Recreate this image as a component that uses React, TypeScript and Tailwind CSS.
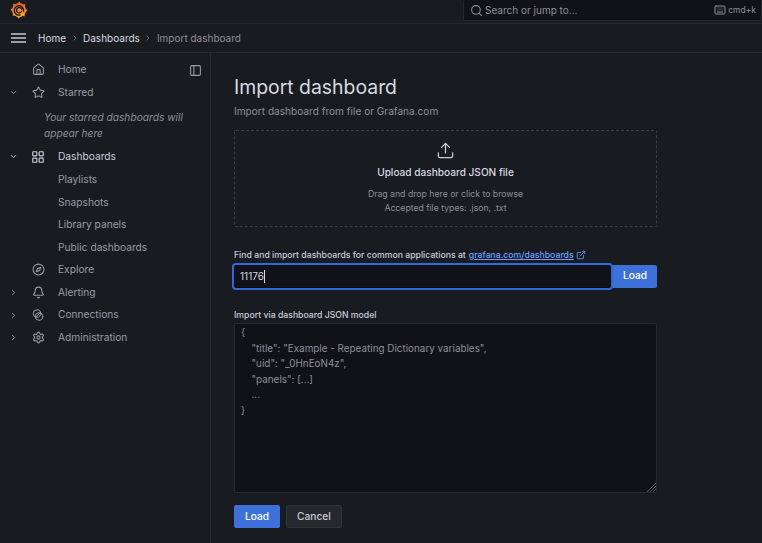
import { Home, Star, LayoutGrid, Compass, Bell, Settings, ChevronDown, ChevronRight, Search, Keyboard, Upload, ExternalLink, PanelLeft } from "lucide-react";

const FONT = "font-['Inter','Liberation_Sans',sans-serif]";

function GrafanaLogo() {
  const teeth = [0, 45, 90, 135, 180, 225, 270, 315];
  return (
    <svg width="18" height="18" viewBox="0 0 24 24">
      <defs>
        <linearGradient id="gf" x1="0" y1="1" x2="0" y2="0" gradientUnits="objectBoundingBox">
          <stop offset="0" stopColor="#fbb01c" />
          <stop offset="1" stopColor="#f0552a" />
        </linearGradient>
      </defs>
      {teeth.map((a) => (
        <path key={a} d="M8.5 5 L12.5 0.5 L16 5 Z" fill="#f47a22" transform={`rotate(${a} 12 12)`} />
      ))}
      <circle cx="12" cy="12" r="9.2" fill="url(#gf)" />
      <path d="M18 13.5 A6.2 6.2 0 1 0 13.5 18.6" fill="none" stroke="#181b1f" strokeWidth="1.9" strokeLinecap="round" />
      <path d="M15.4 14 A3.6 3.6 0 1 1 15.6 10.8" fill="none" stroke="#181b1f" strokeWidth="1.8" strokeLinecap="round" />
    </svg>
  );
}

function ConnectionsIcon() {
  return (
    <svg width="12" height="12" viewBox="0 0 24 24" fill="none" stroke="currentColor" strokeWidth="2" strokeLinecap="round">
      <circle cx="10" cy="9" r="7.5" />
      <circle cx="14" cy="15" r="7.5" />
      <path d="M9 15l6-6" />
    </svg>
  );
}

type NavItem = { label: string; icon?: React.ReactNode; caret?: "down" | "right"; active?: boolean };

const TOP: NavItem[] = [
  { label: "Home", icon: <Home size={13} /> },
  { label: "Starred", icon: <Star size={13} />, caret: "down" },
];

const MIDDLE: NavItem[] = [
  { label: "Dashboards", icon: <LayoutGrid size={14} />, caret: "down", active: true },
  { label: "Playlists" },
  { label: "Snapshots" },
  { label: "Library panels" },
  { label: "Public dashboards" },
  { label: "Explore", icon: <Compass size={13} /> },
  { label: "Alerting", icon: <Bell size={13} />, caret: "right" },
  { label: "Connections", icon: <ConnectionsIcon />, caret: "right" },
  { label: "Administration", icon: <Settings size={13} />, caret: "right" },
];

function NavRow({ item }: { item: NavItem }) {
  return (
    <div className={`flex h-[22.6px] items-center text-[10.2px] ${item.active ? "text-[#ccccdc]" : "text-[#9b9ca6]"}`}>
      <span className="flex w-[26px] justify-center">
        {item.caret === "down" && <ChevronDown size={9} strokeWidth={2.5} />}
        {item.caret === "right" && <ChevronRight size={9} strokeWidth={2.5} />}
      </span>
      <span className="flex w-[24px] justify-center">{item.icon}</span>
      <span className="ml-[8px]">{item.label}</span>
    </div>
  );
}

export default function App() {
  return (
    <div className={`flex h-[543px] w-[762px] flex-col overflow-hidden bg-[#181b1f] text-[#ccccdc] ${FONT}`}>
      {/* Top bar */}
      <header className="flex h-[24px] shrink-0 items-start border-b border-[#26292e] pl-[10px]">
        <div className="mt-[1px]">
          <GrafanaLogo />
        </div>
        <div className="ml-auto flex h-[21px] w-[299px] items-center rounded-[2px] border border-t-0 border-[#24272c] bg-[#111217] pl-[6px] pr-[5px] text-[#8e8f98]">
          <Search size={13} />
          <span className="ml-[2px] text-[10px]">Search or jump to...</span>
          <Keyboard size={12} className="ml-auto" />
          <span className="ml-[2px] text-[8.5px]">cmd+k</span>
        </div>
      </header>

      {/* Breadcrumbs */}
      <div className="flex h-[29px] shrink-0 items-center border-b border-[#26292e] pl-[11px] text-[10px]">
        <svg width="15" height="10" viewBox="0 0 15 10" className="text-[#c8c9d2]" stroke="currentColor" strokeWidth="1.5">
          <path d="M0 1h15M0 5h15M0 9h15" />
        </svg>
        <span className="ml-[12px] text-[#d8d9e2]">Home</span>
        <ChevronRight size={8} className="mx-[4.5px] text-[#8e8f98]" />
        <span className="text-[#d8d9e2]">Dashboards</span>
        <ChevronRight size={8} className="mx-[4.5px] text-[#8e8f98]" />
        <span className="text-[#8e8f98]">Import dashboard</span>
      </div>

      <div className="flex min-h-0 flex-1">
        {/* Sidebar */}
        <aside className="relative w-[211px] shrink-0 border-r border-[#26292e] pt-[5.5px]">
          <PanelLeft size={13} className="absolute right-[8px] top-[10.5px] text-[#9b9ca6]" />
          {TOP.map((item) => (
            <NavRow key={item.label} item={item} />
          ))}
          <p className="ml-[44px] mt-[5px] w-[150px] text-[10.2px] leading-[16px] italic text-[#8e8f98]">
            Your starred dashboards will appear here
          </p>
          <div className="mt-[5px]">
            {MIDDLE.map((item) => (
              <NavRow key={item.label} item={item} />
            ))}
          </div>
        </aside>

        {/* Main */}
        <main className="min-w-0 flex-1 pl-[23px] pr-[105px] pt-[20px]">
          <h1 className="text-[19.4px] leading-[28px] text-[#d8d9e2]">Import dashboard</h1>
          <p className="mt-[3px] text-[10.1px] leading-[14px] text-[#8e8f98]">Import dashboard from file or Grafana.com</p>

          <div className="mt-[12px] flex h-[97px] flex-col items-center rounded-[2px] border border-dashed border-[#3a3d43] pt-[10px]">
            <Upload size={19} strokeWidth={1.6} className="text-[#ccccdc]" />
            <p className="mt-[5px] text-[10.1px] font-medium leading-[14px] text-[#d8d9e2]">Upload dashboard JSON file</p>
            <p className="mt-[8px] text-[8.7px] leading-[14px] text-[#8e8f98]">Drag and drop here or click to browse</p>
            <p className="text-[8.7px] leading-[14px] text-[#8e8f98]">Accepted file types: .json, .txt</p>
          </div>

          <p className="mt-[21px] flex items-center text-[8.7px] font-medium leading-[14px] text-[#ccccdc]">
            Find and import dashboards for common applications at
            <span className="ml-[3px] text-[#6e9fff] underline">grafana.com/dashboards</span>
            <ExternalLink size={10} className="ml-[2px] text-[#6e9fff]" />
          </p>
          <div className="-ml-[2px] mt-[0.5px] flex items-center">
            <div className="flex h-[27px] flex-1 items-center rounded-[4px] border-2 border-[#2f6bd8] bg-[#111217] pl-[6px] text-[10px] text-[#d8d9e2] shadow-[inset_0_0_0_1px_#0b0c0f]">
              11176<span className="h-[13px] w-px bg-[#d8d9e2]" />
            </div>
            <button className="flex h-[23px] w-[44px] shrink-0 items-center justify-center rounded-r-[2px] bg-[#3d71d9] text-[10.2px] font-medium text-white">
              Load
            </button>
          </div>

          <p className="mt-[18.5px] text-[8.7px] font-medium leading-[14px] text-[#ccccdc]">Import via dashboard JSON model</p>
          <div className="relative mt-[1px] h-[170px] rounded-[2px] border border-[#26292e] bg-[#111217] pl-[6px] pt-[1px] text-[9.9px] leading-[15.6px] text-[#8e8f98]">
            <div>{"{"}</div>
            <div className="pl-[10.5px]">"title": "Example - Repeating Dictionary variables",</div>
            <div className="pl-[10.5px]">"uid": "_0HnEoN4z",</div>
            <div className="pl-[10.5px]">"panels": [...]</div>
            <div className="pl-[10.5px]">...</div>
            <div>{"}"}</div>
            <svg width="10" height="10" viewBox="0 0 10 10" className="absolute bottom-0 right-0 text-[#55585e]" stroke="currentColor">
              <path d="M1 10L10 1M4 10l6-6M7 10l3-3" />
            </svg>
          </div>

          <div className="mt-[12px] flex gap-[6px]">
            <button className="flex h-[23px] w-[46px] items-center justify-center rounded-[2px] bg-[#3d71d9] text-[10.2px] font-medium text-white">
              Load
            </button>
            <button className="flex h-[23px] w-[56px] items-center justify-center rounded-[2px] border border-[#2e3136] bg-[#25282d] text-[10.2px] font-medium text-[#ccccdc]">
              Cancel
            </button>
          </div>
        </main>
      </div>
    </div>
  );
}
